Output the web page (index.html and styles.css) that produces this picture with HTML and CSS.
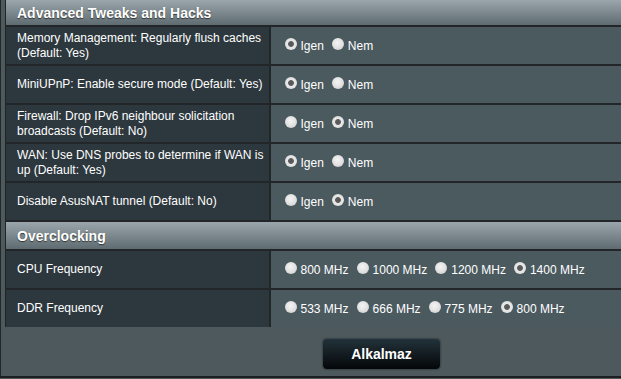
FILE: index.html
```html
<!DOCTYPE html>
<html>
<head>
<meta charset="utf-8">
<link rel="stylesheet" href="styles.css">
</head>
<body>
<div class="frame">
  <table class="settings">
    <colgroup><col class="c1"><col class="c2"></colgroup>
    <tr class="head"><th colspan="2">Advanced Tweaks and Hacks</th></tr>
    <tr>
      <td class="lbl">Memory Management: Regularly flush caches (Default: Yes)</td>
      <td class="val"><span class="opt"><i class="radio on"></i>Igen</span><span class="opt"><i class="radio"></i>Nem</span></td>
    </tr>
    <tr>
      <td class="lbl">MiniUPnP: Enable secure mode (Default: Yes)</td>
      <td class="val"><span class="opt"><i class="radio on"></i>Igen</span><span class="opt"><i class="radio"></i>Nem</span></td>
    </tr>
    <tr>
      <td class="lbl">Firewall: Drop IPv6 neighbour solicitation broadcasts (Default: No)</td>
      <td class="val"><span class="opt"><i class="radio"></i>Igen</span><span class="opt"><i class="radio on"></i>Nem</span></td>
    </tr>
    <tr>
      <td class="lbl">WAN: Use DNS probes to determine if WAN is up (Default: Yes)</td>
      <td class="val"><span class="opt"><i class="radio on"></i>Igen</span><span class="opt"><i class="radio"></i>Nem</span></td>
    </tr>
    <tr>
      <td class="lbl">Disable AsusNAT tunnel (Default: No)</td>
      <td class="val"><span class="opt"><i class="radio"></i>Igen</span><span class="opt"><i class="radio on"></i>Nem</span></td>
    </tr>
    <tr class="head sub"><th colspan="2">Overclocking</th></tr>
    <tr>
      <td class="lbl">CPU Frequency</td>
      <td class="val"><span class="opt"><i class="radio"></i>800 MHz</span><span class="opt"><i class="radio"></i>1000 MHz</span><span class="opt"><i class="radio"></i>1200 MHz</span><span class="opt"><i class="radio on"></i>1400 MHz</span></td>
    </tr>
    <tr>
      <td class="lbl">DDR Frequency</td>
      <td class="val"><span class="opt"><i class="radio"></i>533 MHz</span><span class="opt"><i class="radio"></i>666 MHz</span><span class="opt"><i class="radio"></i>775 MHz</span><span class="opt"><i class="radio on"></i>800 MHz</span></td>
    </tr>
  </table>
  <div class="actions"><button class="apply">Alkalmaz</button></div>
</div>
</body>
</html>
```
FILE: styles.css
```css
html, body {
  margin: 0;
  padding: 0;
  background: #4e5a5e;
  overflow: hidden;
}
body {
  font-family: "Liberation Sans", Arial, sans-serif;
  font-size: 12px;
  color: #fff;
}
.frame {
  height: 376px;
  border-left: 1px solid #222829;
  border-bottom: 2px solid #1b1f20;
  padding-left: 4px;
  background: #4e595d;
}
.settings {
  width: 620px;
  table-layout: fixed;
  border-collapse: collapse;
  border-left: 1px solid #1f2426;
}
.c1 { width: 264px; }
.settings th, .settings td {
  border-top: 2px solid #222628;
  padding: 0;
}
.head th {
  height: 25px;
  border-top: 0;
  text-align: left;
  padding-left: 11px;
  font-size: 14px;
  font-weight: bold;
  color: #fff;
  background: linear-gradient(#9aa6ab, #5e6b70);
  text-shadow: 0 1px 1px #333;
}
.head.sub th {
  height: 26px;
  border-top: 2px solid #222628;
  padding-top: 1px;
}
.lbl {
  height: 37px;
  padding: 0 4px 0 11px !important;
  background: #2d383e;
  border-right: 2px solid #222628;
  line-height: 15px;
  color: #fff;
}
.val {
  background: #4b5a5f;
  padding-left: 14px !important;
  white-space: nowrap;
  color: #fff;
}
.opt {
  display: inline-flex;
  align-items: center;
  margin-right: 8px;
}
.radio {
  display: inline-block;
  width: 12px;
  height: 12px;
  border-radius: 50%;
  margin-right: 4px;
  margin-top: -4px;
  background: radial-gradient(circle at 45% 40%, #f4f4f4 0, #e2e2e2 50%, #c4c4c4 100%);
}
.radio.on {
  background: radial-gradient(circle, #555 0, #5e5e5e 2.5px, #e8e8e8 3.3px, #d8d8d8 100%);
}
.actions {
  display: flex;
  justify-content: center;
  padding-top: 11px;
  padding-left: 137px;
}
.apply {
  width: 119px;
  height: 32px;
  border-radius: 5px;
  border: 1px solid #3c484c;
  background: linear-gradient(#22323a, #050708);
  color: #fff;
  font-family: "Liberation Sans", Arial, sans-serif;
  font-size: 14px;
  font-weight: bold;
  box-shadow: 0 0 1px #222;
}
```
